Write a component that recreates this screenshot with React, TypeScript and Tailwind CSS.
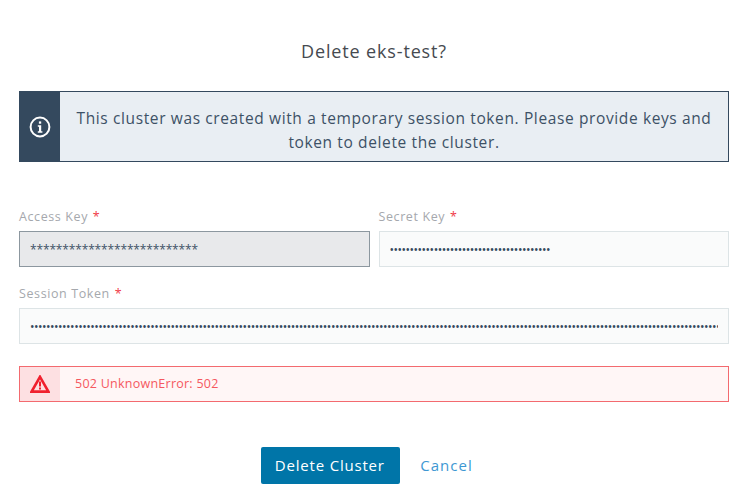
import React from 'react';

const Req: React.FC<{ label: string }> = ({ label }) => (
    <label className="block pt-[1px] text-[12.5px] leading-[18px] tracking-[0.6px] text-[#a5a8ad] mb-[5px]">
        {label} <span className="ml-[1px] text-[#f03a47]">*</span>
    </label>
);

const App: React.FC = () => {
    return (
        <div className="w-[748px] h-[504px] bg-white overflow-hidden px-[19px] font-['Open_Sans','Noto_Sans',sans-serif]">
            <h1 className="pt-[39px] h-[91px] text-center text-[18px] leading-6 tracking-[0.85px] text-[#464a50]">
                Delete eks-test?
            </h1>

            <div className="flex h-[71px] border border-[#34495e] bg-[#e9eef3]">
                <div className="w-[40px] shrink-0 bg-[#34495e] flex items-center justify-center">
                    <svg width="22" height="22" viewBox="0 0 22 22">
                        <circle cx="11" cy="11" r="9.4" fill="none" stroke="white" strokeWidth="2" />
                        <rect x="9.9" y="5.4" width="2.3" height="2.3" fill="white" />
                        <path d="M8.8 9.2 H12.2 V15.2 H13.4 V16.7 H8.8 V15.2 H10 V10.7 H8.8 Z" fill="white" />
                    </svg>
                </div>
                <p className="flex-1 flex items-center justify-center text-center px-[16px] pt-[7px] text-[15.5px] leading-[24px] tracking-[0.62px] text-[#3d5166]">
                    This cluster was created with a temporary session token. Please provide keys and token to delete the cluster.
                </p>
            </div>

            <div className="grid grid-cols-2 gap-x-[9px] mt-[45px]">
                <div>
                    <Req label="Access Key" />
                    <input
                        disabled
                        value="**************************"
                        className="w-full h-[36px] px-[10px] border border-[#8c979f] bg-[#e8e9eb] text-[12px] tracking-[-0.15px] text-[#3d5166]"
                        readOnly
                    />
                </div>
                <div>
                    <Req label="Secret Key" />
                    <input
                        type="password"
                        readOnly
                        value={'x'.repeat(40)}
                        className="w-full h-[36px] px-[10px] border border-[#dde4e6] bg-[#fafbfb] text-[12px] tracking-[-0.5px] text-[#34495e]"
                    />
                </div>
            </div>

            <div className="mt-[17px]">
                <Req label="Session Token" />
                <input
                    type="password"
                    readOnly
                    value={'x'.repeat(172)}
                    className="w-full h-[36px] px-[10px] border border-[#dde4e6] bg-[#fafbfb] text-[12px] tracking-[-0.5px] text-[#34495e]"
                />
            </div>

            <div className="flex h-[36px] mt-[22px] border border-[#f36a6f] bg-[#fff6f6]">
                <div className="w-[40px] shrink-0 bg-[#fde0e2] flex items-center justify-center">
                    <svg width="20" height="18" viewBox="0 0 20 18">
                        <path d="M10 1.8 L18.4 16.6 H1.6 Z" fill="none" stroke="#f0202e" strokeWidth="2.6" strokeLinejoin="miter" />
                        <rect x="9" y="6.5" width="2" height="5" fill="#f0202e" />
                        <rect x="9" y="12.5" width="2" height="2" fill="#f0202e" />
                    </svg>
                </div>
                <p className="pl-[15px] pt-[1px] flex items-center text-[12.5px] tracking-[0.25px] text-[#f5585f]">502 UnknownError: 502</p>
            </div>

            <div className="flex justify-center items-center gap-[20px] mt-[45px]">
                <button className="w-[139px] h-[37px] rounded-[2px] bg-[#0075a8] text-white text-[15px] tracking-[0.8px] pr-[2px]">
                    Delete Cluster
                </button>
                <a className="pr-[14px] text-[15px] tracking-[1px] text-[#3d98d3]">Cancel</a>
            </div>
        </div>
    );
};

export default App;
